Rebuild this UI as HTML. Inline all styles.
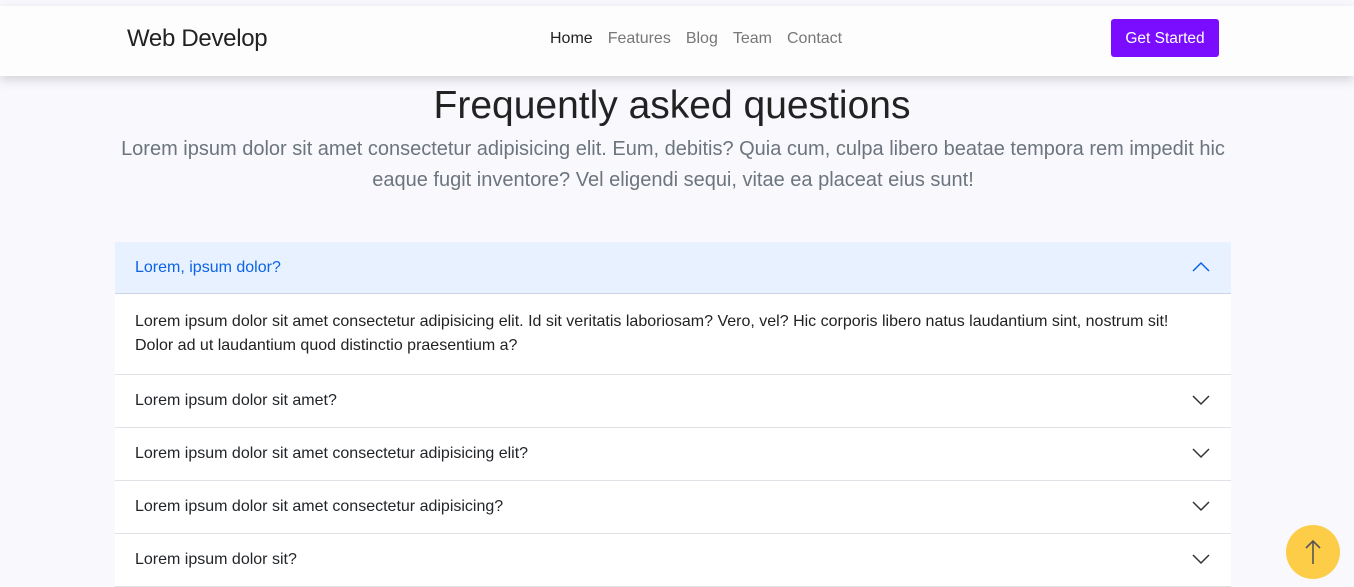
<!DOCTYPE html>
<html><head><style>
*{margin:0;padding:0;box-sizing:border-box}
body{width:1354px;height:586px;overflow:hidden;background:#f8f8fd;font-family:"Liberation Sans",sans-serif;position:relative;color:#212529}
.nav{position:absolute;left:0;top:6px;width:1354px;height:70px;background:#fdfdfe;box-shadow:0 4px 10px rgba(0,0,0,.15);z-index:2}
.brand{position:absolute;left:127px;top:19px;font-size:24px;color:#222;letter-spacing:-0.3px}
.links{position:absolute;left:550px;top:24px;font-size:16px;color:#777}
.links span{margin-right:15px}
.links span:first-child{color:#222}
.btn{position:absolute;left:1111px;top:13px;width:108px;height:38px;background:#7a0cff;color:#fff;border-radius:3px;font-size:15.5px;text-align:center;line-height:40px}
h1{position:absolute;left:0;width:1344px;top:84px;text-align:center;font-weight:300;font-size:39px;color:#222}
.lead{position:absolute;left:108px;width:1130px;top:134px;text-align:center;font-size:20px;line-height:31px;color:#6c757d}
.acc{position:absolute;left:115px;top:242px;width:1116px;background:#fff}
.item{border-bottom:1px solid #dee2e6;height:53px;padding-left:20px;font-size:16px;line-height:52px;position:relative}
.item.open{background:#e7f1ff;color:#0c63e4;height:52px;border-bottom:1px solid #c9d6e8;line-height:51px}
.body{padding:16px 20px 0;height:81px;border-bottom:1px solid #dee2e6;font-size:16px;line-height:24px;color:#222}
.item svg{position:absolute;right:21px;top:19px}
.top{position:absolute;left:1286px;top:525px;width:54px;height:54px;border-radius:50%;background:#fdcd47}
</style></head><body>
<div class="nav">
<div class="brand">Web Develop</div>
<div class="links"><span>Home</span><span>Features</span><span>Blog</span><span>Team</span><span>Contact</span></div>
<div class="btn">Get Started</div>
</div>
<h1>Frequently asked questions</h1>
<div class="lead">Lorem ipsum dolor sit amet consectetur adipisicing elit. Eum, debitis? Quia cum, culpa libero beatae tempora rem impedit hic eaque fugit inventore? Vel eligendi sequi, vitae ea placeat eius sunt!</div>
<div class="acc">
<div class="item open">Lorem, ipsum dolor?<svg width="18" height="12" viewBox="0 0 18 12"><path d="M1 10L9 2L17 10" fill="none" stroke="#0c63e4" stroke-width="1.5"/></svg></div>
<div class="body">Lorem ipsum dolor sit amet consectetur adipisicing elit. Id sit veritatis laboriosam? Vero, vel? Hic corporis libero natus laudantium sint, nostrum sit!<br>Dolor ad ut laudantium quod distinctio praesentium a?</div>
<div class="item">Lorem ipsum dolor sit amet?<svg width="18" height="12" viewBox="0 0 18 12"><path d="M1 2L9 10L17 2" fill="none" stroke="#333" stroke-width="1.5"/></svg></div>
<div class="item">Lorem ipsum dolor sit amet consectetur adipisicing elit?<svg width="18" height="12" viewBox="0 0 18 12"><path d="M1 2L9 10L17 2" fill="none" stroke="#333" stroke-width="1.5"/></svg></div>
<div class="item">Lorem ipsum dolor sit amet consectetur adipisicing?<svg width="18" height="12" viewBox="0 0 18 12"><path d="M1 2L9 10L17 2" fill="none" stroke="#333" stroke-width="1.5"/></svg></div>
<div class="item">Lorem ipsum dolor sit?<svg width="18" height="12" viewBox="0 0 18 12"><path d="M1 2L9 10L17 2" fill="none" stroke="#333" stroke-width="1.5"/></svg></div>
</div>
<div class="top"><svg width="54" height="54" viewBox="0 0 54 54"><path d="M27 39V16M20 23L27 16L34 23" fill="none" stroke="#555" stroke-width="1.6"/></svg></div>
</body></html>
